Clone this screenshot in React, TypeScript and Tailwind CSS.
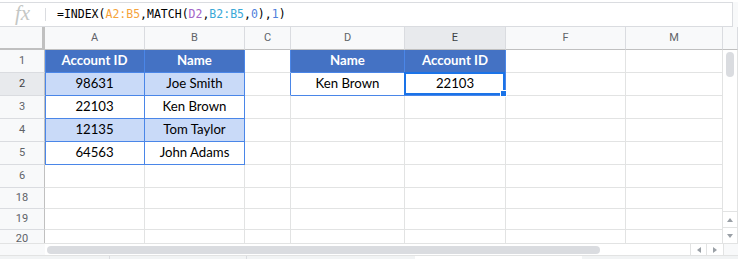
import React from 'react';

const cols = ['A', 'B', 'C', 'D', 'E', 'F', 'M'];
const rows = [1, 2, 3, 4, 5, 6, 18, 19, 20];

const data: Record<string, string> = {
  A1: 'Account ID', B1: 'Name',
  A2: '98631', B2: 'Joe Smith',
  A3: '22103', B3: 'Ken Brown',
  A4: '12135', B4: 'Tom Taylor',
  A5: '64563', B5: 'John Adams',
  D1: 'Name', E1: 'Account ID',
  D2: 'Ken Brown', E2: '22103',
};

const isHead = (id: string) => ['A1', 'B1', 'D1', 'E1'].includes(id);
const isBody = (id: string) => ['A2', 'A3', 'A4', 'A5', 'B2', 'B3', 'B4', 'B5', 'D2', 'E2'].includes(id);

const cellClass = (c: string, r: number) => {
  const id = c + r;
  let cls = 'relative border-r border-b flex items-center justify-center text-[13.2px] text-black';
  if (isHead(id)) cls += ' bg-[#4472c4] text-white font-bold border-[#4a86e8]';
  else if (isBody(id)) cls += (r === 2 || r === 4) && (c === 'A' || c === 'B') ? ' bg-[#c9daf8] border-[#4a86e8]' : ' bg-white border-[#4a86e8]';
  else if (c === 'C' && r <= 2) cls += ' bg-white border-b-[#e2e3e3] border-r-[#4a86e8]';
  else cls += ' bg-white border-[#e2e3e3]';
  if (c === 'A' && r <= 5) cls += ' shadow-[inset_1px_0_0_#4a86e8]';
  if (r === 20) cls += ' border-b-0';
  return cls;
};

const Tri = ({ dir }: { dir: 'up' | 'down' | 'left' | 'right' }) => {
  if (dir === 'up') return <div className="w-0 h-0 border-l-[3px] border-r-[3px] border-b-[4px] border-l-transparent border-r-transparent border-b-[#9aa0a6]" />;
  if (dir === 'down') return <div className="w-0 h-0 border-l-[3px] border-r-[3px] border-t-[4px] border-l-transparent border-r-transparent border-t-[#9aa0a6]" />;
  if (dir === 'left') return <div className="w-0 h-0 border-t-[3px] border-b-[3px] border-r-[4px] border-t-transparent border-b-transparent border-r-[#9aa0a6]" />;
  return <div className="w-0 h-0 border-t-[3px] border-b-[3px] border-l-[4px] border-t-transparent border-b-transparent border-l-[#9aa0a6]" />;
};

export default function App() {
  return (
    <div className="w-[738px] h-[259px] overflow-hidden bg-white font-['Lato'] flex flex-col">
      {/* formula bar */}
      <div className="h-[27px] pt-[2px] flex shrink-0">
        <div className="w-[733px] border-t border-b border-r border-[#dadce0] flex items-center">
          <div className="w-[45px] flex items-center justify-center">
            <span className="font-['Liberation_Serif'] italic text-[21px] text-[#c4c7c5] leading-none -mt-[3px]">fx</span>
          </div>
          <div className="w-px h-[13px] bg-[#dadce0]" />
          <div className="pl-[11px] font-['DejaVu_Sans_Mono'] text-[11.5px] text-[#000] whitespace-nowrap">
            =INDEX(<span className="text-[#f6a33b]">A2:B5</span>,MATCH(<span className="text-[#a464c8]">D2</span>,<span className="text-[#3aa9d8]">B2:B5</span>,<span className="text-[#4f7fdc]">0</span>),<span className="text-[#4f7fdc]">1</span>)
          </div>
        </div>
        <div className="flex-1 bg-[#f8f9fa]" />
      </div>

      {/* grid */}
      <div className="flex h-[216px] shrink-0">
        <div className="grid grid-cols-[45px_100px_100px_46px_114px_101px_120px_97px] grid-rows-[23px_23px_23px_23px_23px_23px_23px_21px_21px_13px]">
          <div className="bg-[#f8f9fa] border-r-[3px] border-b-2 border-[#c0c0c0]" />
          {cols.map((c) => (
            <div
              key={c}
              className={
                c === 'E'
                  ? "bg-[#e8eaed] border-r border-b border-r-[#dadce0] border-b-[#c0c0c0] flex items-center justify-center font-['Roboto'] text-[11px] text-[#3c4043]"
                  : "bg-[#f8f9fa] border-r border-b border-r-[#dadce0] border-b-[#c0c0c0] flex items-center justify-center font-['Roboto'] text-[11px] text-[#5f6368]"
              }
            >
              {c}
            </div>
          ))}
          {rows.map((r) => (
            <React.Fragment key={r}>
              <div
                className={
                  r === 2
                    ? "bg-[#e8eaed] border-r border-b border-r-[#c0c0c0] border-b-[#dadce0] flex items-center justify-center font-['Roboto'] text-[11px] text-[#3c4043]"
                    : r === 20
                    ? "bg-[#f8f9fa] border-r border-r-[#c0c0c0] flex items-start justify-center pt-[2px] font-['Roboto'] text-[11px] leading-[13px] text-[#5f6368] overflow-hidden"
                    : "bg-[#f8f9fa] border-r border-b border-r-[#c0c0c0] border-b-[#dadce0] flex items-center justify-center font-['Roboto'] text-[11px] text-[#5f6368]"
                }
              >
                {r}
              </div>
              {cols.map((c) => (
                <div key={c + r} className={cellClass(c, r)}>
                  {data[c + r]}
                  {c + r === 'E2' && (
                    <div className="absolute -left-px -top-px right-0 bottom-0 border-2 border-[#1a73e8] z-10">
                      <div className="absolute w-[7px] h-[7px] bg-[#1a73e8] border border-white -right-[4px] -bottom-[4px]" />
                    </div>
                  )}
                </div>
              ))}
            </React.Fragment>
          ))}
        </div>

        {/* vertical scrollbar */}
        <div className="w-[15px] flex flex-col">
          <div className="h-[23px] bg-[#f8f9fa] border-b border-r border-[#c0c0c0] border-r-[#dadce0]" />
          <div className="flex-1 flex flex-col border-r border-[#e2e3e3]">
            <div className="mt-[2px] mx-auto w-[8px] h-[25px] rounded-full bg-[#dadce0]" />
            <div className="flex-1" />
            <div className="h-[17px] border-t border-b border-[#e2e3e3] flex items-center justify-center">
              <Tri dir="up" />
            </div>
            <div className="h-[15px] flex items-center justify-center">
              <Tri dir="down" />
            </div>
          </div>
        </div>
      </div>

      {/* horizontal scrollbar */}
      <div className="h-[12px] flex shrink-0 border-t border-[#e2e3e3]">
        <div className="w-[45px] bg-[#f8f9fa]" />
        <div className="w-[645px] flex items-center pl-[2px]">
          <div className="w-[553px] h-[8px] rounded-full bg-[#dadce0]" />
        </div>
        <div className="w-[16px] border-l border-[#e2e3e3] flex items-center justify-center">
          <Tri dir="left" />
        </div>
        <div className="w-[17px] border-l border-[#e2e3e3] flex items-center justify-center">
          <Tri dir="right" />
        </div>
        <div className="flex-1 border-l border-[#e2e3e3] bg-[#f8f9fa]" />
      </div>

      {/* sheet tabs strip */}
      <div className="h-[4px] flex bg-[#f1f3f4] border-t border-[#e2e3e3]">
        <div className="w-[110px] border-r border-[#dadce0]" />
        <div className="w-[137px] border-r border-[#dadce0]" />
        <div className="w-[168px]" />
        <div className="w-[167px] bg-white" />
      </div>
    </div>
  );
}
